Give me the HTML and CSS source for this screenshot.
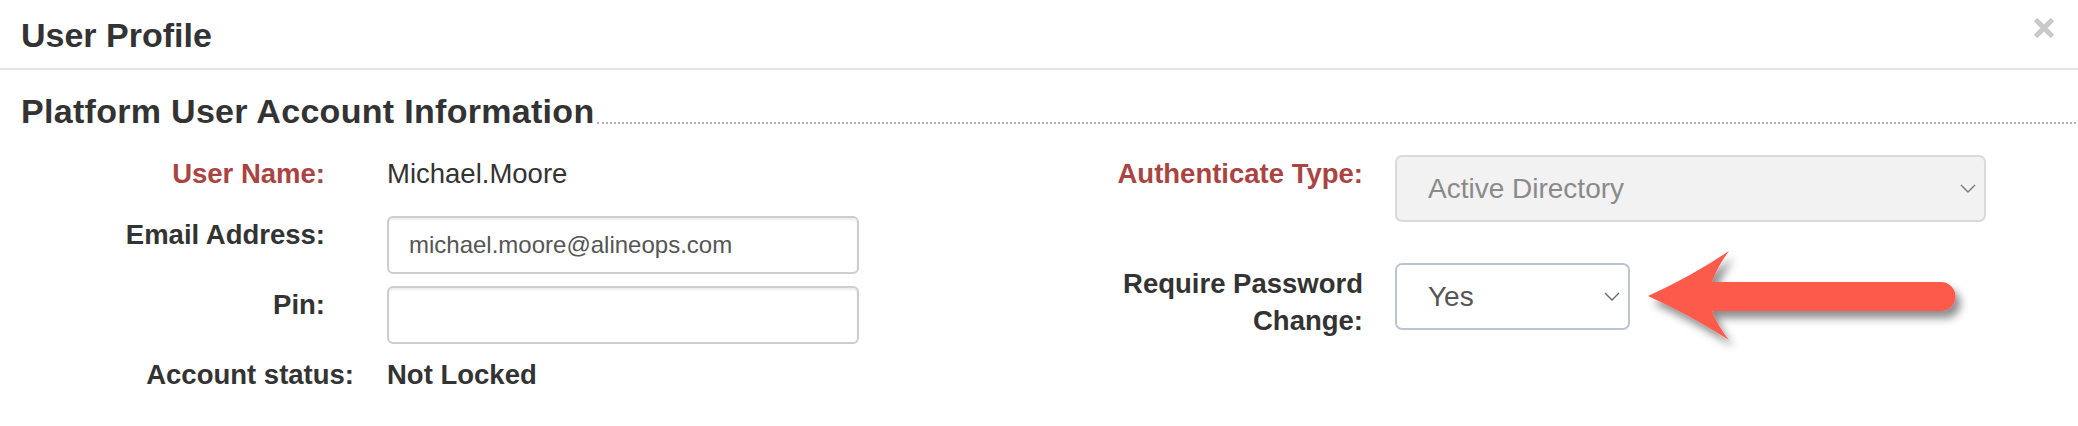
FILE: index.html
```html
<!DOCTYPE html>
<html lang="en">
<head>
<meta charset="utf-8">
<title>User Profile</title>
<link rel="stylesheet" href="styles.css">
</head>
<body>
<div class="modal">
  <div class="modal-header">
    <h4 class="modal-title">User Profile</h4>
    <button class="close" type="button" aria-label="Close">
      <svg width="22" height="22" viewBox="0 0 22 22"><path d="M2.5 2.5 L19.5 19.5 M19.5 2.5 L2.5 19.5" stroke="#c9c9c9" stroke-width="5" fill="none"/></svg>
    </button>
  </div>
  <div class="modal-body">
    <h4 class="section-title"><span>Platform User Account Information</span></h4>
    <div class="form">
      <div class="form-col left">
        <label class="lbl req">User Name:</label>
        <div class="static">Michael.Moore</div>
        <label class="lbl">Email Address:</label>
        <input class="input" type="text" value="michael.moore@alineops.com">
        <label class="lbl">Pin:</label>
        <input class="input" type="text" value="">
        <label class="lbl wide">Account status:</label>
        <div class="static bold">Not Locked</div>
      </div>
      <div class="form-col right">
        <label class="lbl req">Authenticate Type:</label>
        <div class="select disabled">
          <span>Active Directory</span>
          <svg class="chev" width="16" height="9" viewBox="0 0 16 9"><polyline points="1,1 8,8 15,1" fill="none" stroke="#7a7a7a" stroke-width="1.4"/></svg>
        </div>
        <label class="lbl two">Require Password Change:</label>
        <div class="select short">
          <span>Yes</span>
          <svg class="chev" width="16" height="9" viewBox="0 0 16 9"><polyline points="1,1 8,8 15,1" fill="none" stroke="#6a6a6a" stroke-width="1.4"/></svg>
        </div>
      </div>
    </div>
    <svg class="arrow" width="340" height="125" viewBox="0 0 340 125">
      <defs>
        <filter id="sh" x="-10%" y="-20%" width="130%" height="160%">
          <feDropShadow dx="5" dy="7" stdDeviation="4.5" flood-color="#000" flood-opacity="0.45"/>
        </filter>
      </defs>
      <path d="M8 51 Q52 31 89 6 Q77 22 72 37 L301 37 A14.5 14.5 0 0 1 301 66 L72 66 Q77 80 89 95 Q52 71 8 51 Z" fill="#fc5a4b" filter="url(#sh)"/>
    </svg>
  </div>
</div>
</body>
</html>
```

FILE: styles.css
```css
* {
  box-sizing: border-box;
}

html, body {
  margin: 0;
  padding: 0;
  background: #ffffff;
}

body {
  font-family: "Liberation Sans", Arial, sans-serif;
  color: #333333;
}

.modal {
  position: relative;
  width: 2078px;
  height: 426px;
  overflow: hidden;
}

.modal-header {
  display: flex;
  justify-content: space-between;
  align-items: flex-start;
  padding: 15px 23px 13px 21px;
  border-bottom: 2px solid #e5e5e5;
}

.modal-title {
  margin: 0;
  font-size: 34px;
  line-height: 40px;
  font-weight: 700;
  color: #333333;
}

.close {
  margin: 2px 0 0 0;
  padding: 0;
  border: 0;
  background: none;
  line-height: 0;
}

.modal-body {
  position: relative;
  padding: 21px 2px 0 21px;
}

.section-title {
  display: flex;
  align-items: flex-end;
  margin: 0;
  font-size: 34px;
  line-height: 40px;
  font-weight: 700;
  letter-spacing: 0.3px;
  color: #333333;
}

.section-title::after {
  content: "";
  flex: 1;
  margin: 0 0 7px 3px;
  border-bottom: 2px dotted #b3b3b3;
}

.form {
  display: flex;
  gap: 244px;
  margin-top: 24px;
}

.form-col {
  display: grid;
}

.form-col.left {
  grid-template-columns: 304px 472px;
  grid-template-rows: 49px 58px 58px auto;
  column-gap: 62px;
  row-gap: 12px;
}

.form-col.right {
  grid-template-columns: 260px 591px;
  grid-template-rows: 67px 67px;
  column-gap: 32px;
  row-gap: 41px;
}

.lbl {
  display: block;
  text-align: right;
  font-size: 27.5px;
  line-height: 38px;
  font-weight: 700;
  color: #333333;
}

.lbl.req {
  color: #a94442;
}

.lbl.wide {
  margin-right: -29px;
}

.lbl.two {
  padding-top: 2px;
  line-height: 37px;
}

.static {
  font-size: 27.5px;
  line-height: 38px;
  color: #333333;
}

.static.bold {
  font-weight: 700;
}

.input {
  width: 472px;
  height: 58px;
  margin: 0;
  padding: 0 20px;
  font-family: "Liberation Sans", Arial, sans-serif;
  font-size: 24px;
  color: #555555;
  background: #ffffff;
  border: 2px solid #cdcdcd;
  border-radius: 6px;
  box-shadow: inset 0 2px 2px rgba(0, 0, 0, 0.075);
  outline: none;
}

.select {
  display: flex;
  align-items: center;
  justify-content: space-between;
  height: 67px;
  padding: 0 8px 0 31px;
  font-size: 28px;
  color: #555555;
  background: #ffffff;
  border: 2px solid #b9c5d4;
  border-radius: 7px;
}

.select.disabled {
  color: #8a8a8a;
  background: #f2f2f2;
  border-color: #dadada;
}

.select.short {
  width: 235px;
  justify-self: start;
}

.chev {
  display: block;
  flex: none;
}

.arrow {
  position: absolute;
  left: 1640px;
  top: 175px;
}
```
